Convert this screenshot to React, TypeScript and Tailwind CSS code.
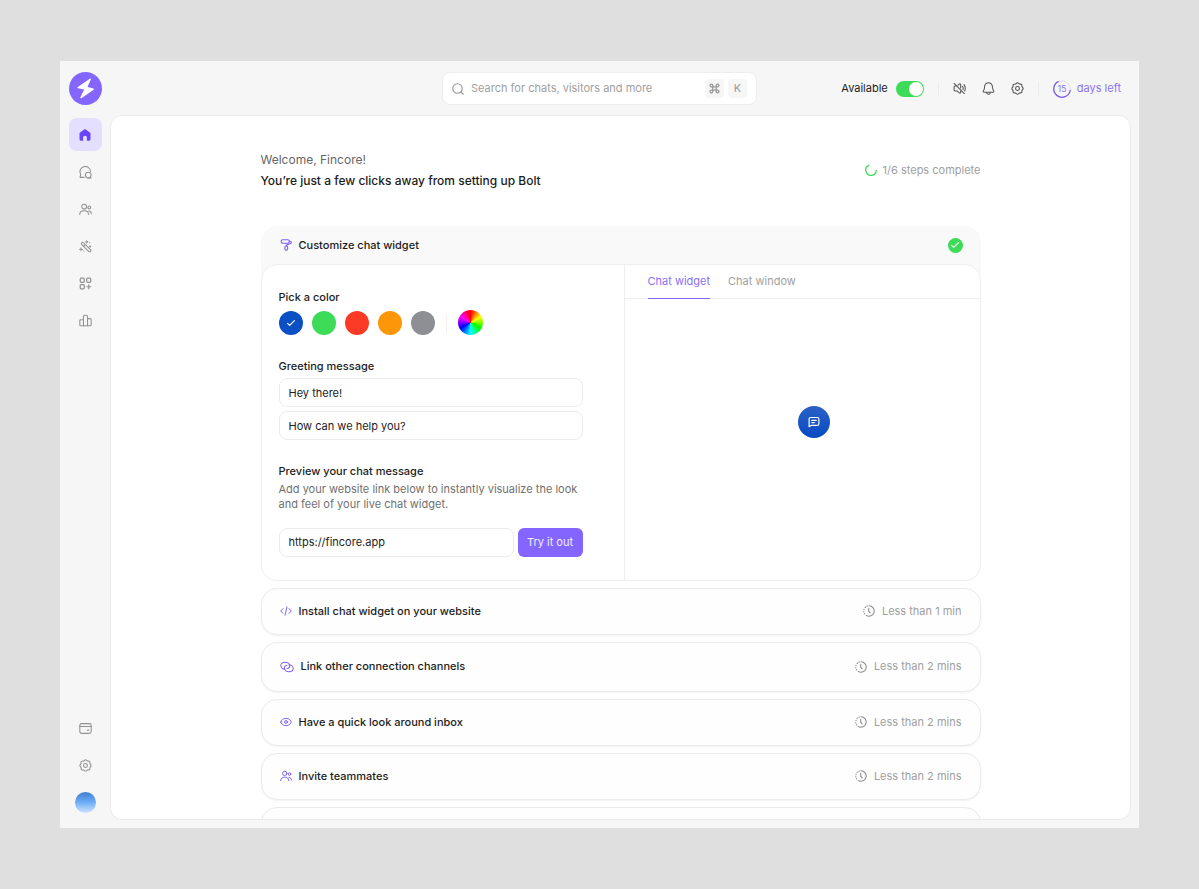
import React, { useState } from "react";
import clsx from "clsx";

type IconProps = { className?: string };

const Icon = ({
  className = "size-3",
  width = 1.3,
  box = "0 0 16 16",
  children,
}: IconProps & { width?: number; box?: string; children: React.ReactNode }) => (
  <svg
    viewBox={box}
    fill="none"
    stroke="currentColor"
    strokeWidth={width}
    strokeLinecap="round"
    strokeLinejoin="round"
    className={clsx("shrink-0", className)}
    aria-hidden="true"
  >
    {children}
  </svg>
);

const HomeIcon = ({ className }: IconProps) => (
  <svg viewBox="0 0 12 12" fill="currentColor" className={className} aria-hidden="true">
    <path d="M5.2.4a1.3 1.3 0 0 1 1.6 0l4.1 3.2c.4.3.6.7.6 1.2V10c0 1.1-.7 1.8-1.8 1.8H7.9V8.6a1.9 1.9 0 0 0-3.8 0v3.2H2.3C1.2 11.8.5 11.1.5 10V4.8c0-.5.2-.9.6-1.2z" />
  </svg>
);

const ChatsIcon = ({ className }: IconProps) => (
  <Icon className={className}>
    <path d="M14.2 6.6A6.5 6.5 0 1 0 2.1 10.300L1.300 14h4.900" />
    <circle cx="11.400" cy="11.200" r="3.500" />
    <path d="M14 13.700l.9 1.100h-3.500" />
  </Icon>
);

const PeopleIcon = ({ className }: IconProps) => (
  <Icon className={className}>
    <circle cx="6.3" cy="4.5" r="2.9" />
    <circle cx="12.7" cy="5.5" r="1.7" />
    <path d="M.9 14.2c0-3 2.200-4.700 5.400-4.700s5.400 1.700 5.400 4.700M12 9.800c2 .1 3.200 1.400 3.200 3.500" />
  </Icon>
);

const WandIcon = ({ className }: IconProps) => (
  <Icon className={className} width={1.3}>
    <path d="M3.400 3.400a1.500 1.500 0 0 1 2.200 0l8.500 8.500a1.500 1.500 0 0 1-2.200 2.200L3.400 5.600a1.500 1.500 0 0 1 0-2.200zM7.800 5.600 5.600 7.800" />
    <path d="M9.500 1v2.600M8.200 2.300h2.600M2.500 9.500v3.600M.7 11.300h3.600M13.600 7.200v1.600M12.800 8h1.600M13.200 3.300l.1.100M6 13.500l.1.100" />
  </Icon>
);

const AppsIcon = ({ className }: IconProps) => (
  <Icon className={className} width={1.5}>
    <rect x="1.5" y="1.5" width="5" height="5" rx="1.2" />
    <rect x="9.5" y="1.5" width="5" height="5" rx="1.2" />
    <rect x="1.5" y="9.5" width="5" height="5" rx="1.2" />
    <path d="M12 9.600v4.800M9.600 12h4.800" />
  </Icon>
);

const ReportsIcon = ({ className }: IconProps) => (
  <Icon className={className}>
    <path d="M5.500 14.500V3a1.500 1.500 0 0 1 1.500-1.500h2A1.500 1.500 0 0 1 10.500 3v11.500" />
    <path d="M5.500 7H2.300C1.500 7 1 7.500 1 8.300v4.900c0 .8.500 1.300 1.300 1.300h11.400c.8 0 1.300-.5 1.300-1.300V7c0-.8-.5-1.300-1.300-1.300h-3.200" />
  </Icon>
);

const CardIcon = ({ className }: IconProps) => (
  <Icon className={className}>
    <rect x="1" y="2" width="14" height="12" rx="2.2" />
    <path d="M1 5.500h14M10.500 10h1.500" />
  </Icon>
);

const GearIcon = ({ className }: IconProps) => (
  <Icon className={className}>
    <circle cx="8" cy="8" r="2.4" />
    <path d="M8 1c1 0 1.600 1.300 2.500 1.600s2-.4 2.600.3.100 1.700.4 2.600S15 7 15 8s-1.200 1.600-1.500 2.500.3 2-.4 2.600-1.700.1-2.600.4S9 15 8 15s-1.600-1.200-2.500-1.500-2 .3-2.600-.4-.1-1.700-.4-2.600S1 9 1 8s1.200-1.600 1.500-2.500-.300-2 .4-2.600 1.700.1 2.600-.3S7 1 8 1z" />
  </Icon>
);

const BellIcon = ({ className }: IconProps) => (
  <Icon className={className}>
    <path d="M8 1a4.800 4.800 0 0 0-4.800 4.800c0 2.700-.7 3.900-1.500 5-.6.900-.2 1.900.8 1.900h11c1 0 1.400-1 .8-1.900-.8-1.100-1.500-2.300-1.500-5A4.800 4.800 0 0 0 8 1zM5.800 12.900a2.200 2.200 0 0 0 4.400 0" />
  </Icon>
);

const MuteIcon = ({ className }: IconProps) => (
  <Icon className={className}>
    <path d="M1.300 1.800 14 14.200M6.200 3.800l1.600-1.300c.7-.6 1.600-.2 1.600.7v4.300M9.400 11v1.800c0 .9-.9 1.300-1.600.7L5 11H2.700c-.9 0-1.400-.5-1.400-1.400V6.400c0-.9.500-1.400 1.400-1.400h1.500" />
    <path d="M11.700 5.300c.8 1.200 1 2.700.6 4.100M13.600 3.200c1.500 2.100 1.900 5.200.8 7.900" />
  </Icon>
);

const SearchIcon = ({ className }: IconProps) => (
  <Icon className={className} width={1.5}>
    <circle cx="7.3" cy="7.3" r="6.3" />
    <path d="m12 12 3 3" />
  </Icon>
);

const CommandIcon = ({ className }: IconProps) => (
  <Icon className={className} width={1.8}>
    <path d="M5.500 5.500h5v5h-5zM5.500 5.500V3.500a2 2 0 1 0-2 2zM10.500 5.500V3.500a2 2 0 1 1 2 2zM5.500 10.500v2a2 2 0 1 1-2-2zM10.500 10.500v2a2 2 0 1 0 2-2z" />
  </Icon>
);

const RollerIcon = ({ className }: IconProps) => (
  <Icon className={className} width={1.5}>
    <rect x="1.5" y="1" width="11" height="4.6" rx="2.2" />
    <path d="M12.500 3h.9c1 0 1.600.7 1.600 1.600 0 1-.5 1.500-1.500 1.800L9.600 7.500c-.9.300-1.300.8-1.300 1.700" />
    <path d="M8.300 9.300c1.100 0 1.900.8 1.900 1.900v1.600c0 1.200-.8 2.200-1.900 2.200s-1.900-1-1.900-2.200v-1.600c0-1.100.8-1.900 1.900-1.900z" />
  </Icon>
);

const CodeIcon = ({ className }: IconProps) => (
  <Icon className={className}>
    <path d="M4 4.800.9 8 4 11.200M12 4.800 15.100 8 12 11.200M9.300 2.500l-2.600 11" />
  </Icon>
);

const LinkIcon = ({ className }: IconProps) => (
  <Icon className={className} box="0 0 18 14">
    <path d="M6.500 9.800C3.500 9.800 1 7.700 1 5.200 1 2.800 3.400 1 6.500 1s6 1.800 6 4.400c0 2-1.500 3.400-3.500 3.800" />
    <path d="M11.500 4.200c3 0 5.500 2.100 5.500 4.600 0 2.400-2.400 4.200-5.500 4.200s-6-1.800-6-4.400c0-2 1.500-3.400 3.500-3.800" />
  </Icon>
);

const EyeIcon = ({ className }: IconProps) => (
  <Icon className={className}>
    <path d="M1 8c0-1.500 3-5 7-5s7 3.500 7 5-3 5-7 5-7-3.500-7-5z" />
    <circle cx="8" cy="8" r="1.9" />
  </Icon>
);

const TimerIcon = ({ className }: IconProps) => (
  <Icon className={className} width={1.5}>
    <path d="M8 1a7 7 0 1 1-3.500 13.100" />
    <path d="M2.300 12a7 7 0 0 1 3.400-10.600" strokeDasharray=".6 2.400" />
    <path d="M7.600 4.500v3.700l1.800 2.400" />
  </Icon>
);

const CheckIcon = ({ className }: IconProps) => (
  <Icon className={className} width={1.8}>
    <path d="m2.500 8.600 3.400 3.300 7.600-7.800" />
  </Icon>
);

const MessageIcon = ({ className }: IconProps) => (
  <Icon className={className} width={1.6}>
    <path d="M1.500 14.300V4c0-1.300.7-2 2-2h9c1.300 0 2 .7 2 2v6.500c0 1.300-.7 2-2 2H4.800c-.8 0-1.300.2-1.800.7z" />
    <path d="M5 5.800h6M5 8.700h3.500" />
  </Icon>
);

const mainNav = [
  { label: "Inbox", icon: ChatsIcon },
  { label: "Visitors", icon: PeopleIcon },
  { label: "Automations", icon: WandIcon },
  { label: "Apps", icon: AppsIcon },
  { label: "Reports", icon: ReportsIcon },
];

const colors = [
  { name: "Blue", swatch: "bg-[#0a4fc4]" },
  { name: "Green", swatch: "bg-[#3edb58]" },
  { name: "Red", swatch: "bg-[#fd3a26]" },
  { name: "Orange", swatch: "bg-[#fd9608]" },
  { name: "Gray", swatch: "bg-[#8e8f94]" },
];

const steps = [
  { title: "Install chat widget on your website", time: "Less than 1 min", icon: CodeIcon },
  { title: "Link other connection channels", time: "Less than 2 mins", icon: LinkIcon, wide: true },
  { title: "Have a quick look around inbox", time: "Less than 2 mins", icon: EyeIcon },
  { title: "Invite teammates", time: "Less than 2 mins", icon: PeopleIcon },
  { title: "", time: "", icon: null },
];

const inputStyle =
  "h-[29px] w-full min-w-0 rounded-lg border border-[#ebebeb] bg-white px-[9px] text-[#222] outline-none";

const Header = () => {
  const [available, setAvailable] = useState(true);

  return (
    <header className="grid h-[54px] shrink-0 grid-cols-[1fr_315px_1fr] items-center pt-px">
      <a href="#" aria-label="Bolt" className="ml-[9px] size-[33px]">
        <svg viewBox="0 0 33 33" aria-hidden="true">
          <circle cx="16.5" cy="16.5" r="16.5" fill="#8466ff" />
          <path
            d="M21.200 7.200 9.200 15.600l7 1.500L12 25.600l12.200-8.500-6.700-1.600z"
            fill="#fff"
            stroke="#fff"
            strokeWidth="1.4"
            strokeLinejoin="round"
          />
        </svg>
      </a>

      <label className="flex h-[33px] items-center rounded-lg border border-[#eeeeee] bg-white px-[9px] text-[#999]">
        <SearchIcon className="size-3" />
        <input
          type="search"
          aria-label="Search"
          placeholder="Search for chats, visitors and more"
          className="ml-[7px] min-w-0 flex-1 outline-none placeholder:text-[#a0a0a0]"
        />
        <kbd className="flex size-[19px] items-center justify-center rounded bg-[#f6f6f6]">
          <CommandIcon className="size-[11px]" />
        </kbd>
        <kbd className="ml-1 flex size-[19px] items-center justify-center rounded bg-[#f6f6f6] font-[Inter,sans-serif]">
          K
        </kbd>
      </label>

      <div className="mr-[18px] flex items-center justify-end text-[#555]">
        <label className="flex items-center gap-2 text-[#1c1c1c]">
          Available
          <input
            type="checkbox"
            role="switch"
            checked={available}
            onChange={() => setAvailable(!available)}
            className="peer sr-only"
          />
          <span className="flex h-4 w-7 items-center rounded-full bg-[#c9c9c9] p-px peer-checked:justify-end peer-checked:bg-[#3edb58]">
            <span className="size-3.5 rounded-full bg-white" />
          </span>
        </label>
        <span className="mx-[14px] h-3.5 w-px bg-[#ececec]" />
        <div className="flex gap-4">
          <button type="button" aria-label="Mute">
            <MuteIcon className="size-[13px]" />
          </button>
          <button type="button" aria-label="Notifications">
            <BellIcon className="size-[13px]" />
          </button>
          <button type="button" aria-label="Preferences">
            <GearIcon className="size-[13px]" />
          </button>
        </div>
        <span className="mx-[14px] h-3.5 w-px bg-[#ececec]" />
        <a href="#" className="flex items-center gap-1.5 whitespace-nowrap text-[#8b74ee]">
          <svg viewBox="0 0 18 18" className="size-[18px]" fill="none" aria-hidden="true">
            <circle cx="9" cy="9" r="8.3" stroke="#e2dcfb" strokeWidth="1" />
            <path
              d="M5.200 1.600A8.300 8.300 0 1 0 17.200 10.500"
              stroke="#7857f0"
              strokeWidth="1.3"
              strokeLinecap="round"
            />
            <text x="9" y="12" textAnchor="middle" fontSize="9" fill="#8b74ee">
              15
            </text>
          </svg>
          days left
        </a>
      </div>
    </header>
  );
};

const Sidebar = () => (
  <aside className="flex w-[50px] shrink-0 flex-col items-center justify-between pt-[3px] pb-0.5 text-[#929292]">
    <nav className="flex flex-col items-center gap-[5px]">
      <a
        href="#"
        aria-label="Home"
        className="flex size-[33px] items-center justify-center rounded-lg bg-[#e4deff] text-[#6a45f8]"
      >
        <HomeIcon className="size-3" />
      </a>
      {mainNav.map(({ label, icon: NavIcon }) => (
        <a key={label} href="#" aria-label={label} className="flex size-8 items-center justify-center">
          <NavIcon className="size-[13px]" />
        </a>
      ))}
    </nav>
    <nav className="flex flex-col items-center gap-[5px]">
      <a href="#" aria-label="Billing" className="flex size-8 items-center justify-center">
        <CardIcon className="size-[13px]" />
      </a>
      <a href="#" aria-label="Settings" className="flex size-8 items-center justify-center">
        <GearIcon className="size-[13px]" />
      </a>
      <a href="#" aria-label="Profile" className="flex size-8 items-center justify-center">
        <span className="size-[21px] rounded-full bg-linear-to-b from-[#3d7fd0] via-[#6fadf8] to-[#cfe4ff]" />
      </a>
    </nav>
  </aside>
);

const WidgetForm = () => {
  const [color, setColor] = useState("Blue");

  return (
    <div className="w-[363px] shrink-0 border-r border-[#eeeeee] pt-6 pr-[41px] pb-[23px] pl-[17px]">
      <fieldset>
        <legend className="leading-4 font-medium">Pick a color</legend>
        <div className="mt-[5px] flex items-center gap-[9px]">
          {colors.map(({ name, swatch }) => (
            <label
              key={name}
              className={clsx("flex size-6 items-center justify-center rounded-full text-white", swatch)}
            >
              <input
                type="radio"
                name="color"
                aria-label={name}
                checked={color === name}
                onChange={() => setColor(name)}
                className="sr-only"
              />
              {color === name && <CheckIcon className="size-2.5" />}
            </label>
          ))}
          <span className="mx-0.5 h-[18px] w-px bg-[#f3ecf2]" />
          <button
            type="button"
            aria-label="Custom color"
            className="size-[25px] rounded-full bg-[conic-gradient(#f00,#ff0,#0f0,#0ff,#00f,#f0f,#f00)]"
          />
        </div>
      </fieldset>

      <fieldset className="mt-[23px]">
        <legend className="leading-4 font-medium">Greeting message</legend>
        <div className="mt-1 flex flex-col gap-1">
          <input aria-label="First greeting line" defaultValue="Hey there!" className={inputStyle} />
          <input aria-label="Second greeting line" defaultValue="How can we help you?" className={inputStyle} />
        </div>
      </fieldset>

      <div className="mt-[23px]">
        <label htmlFor="website" className="leading-4 font-medium">
          Preview your chat message
        </label>
        <p className="mt-0.5 leading-[15px] text-[#707070]">
          Add your website link below to instantly visualize the look and feel of your live chat widget.
        </p>
        <div className="mt-4 flex gap-1">
          <input id="website" type="url" defaultValue="https://fincore.app" className={inputStyle} />
          <button
            type="button"
            className="h-[29px] w-[65px] shrink-0 rounded-md bg-[#8466ff] text-[#f1edff]"
          >
            Try it out
          </button>
        </div>
      </div>
    </div>
  );
};

const WidgetPreview = () => (
  <div className="flex min-w-0 flex-1 flex-col">
    <div role="tablist" className="flex h-[34px] gap-[18px] border-b border-[#eeeeee] pl-[23px]">
      <button
        type="button"
        role="tab"
        aria-selected="true"
        className="-mb-px border-b border-[#8466ff] text-[#8b6ff5]"
      >
        Chat widget
      </button>
      <button type="button" role="tab" aria-selected="false" className="text-[#a0a0a0]">
        Chat window
      </button>
    </div>
    <div className="flex flex-1 items-center justify-center pb-[34px] pl-6">
      <button
        type="button"
        aria-label="Open chat"
        className="flex size-8 items-center justify-center rounded-full bg-linear-to-b from-[#2a61c4] to-[#0549c4] text-white"
      >
        <MessageIcon className="size-3" />
      </button>
    </div>
  </div>
);

const Setup = () => (
  <main className="min-w-0 flex-1 overflow-hidden rounded-xl border border-[#ebebeb] bg-white">
    <div className="mx-auto w-full max-w-[720px] pt-[33px]">
      <div className="flex items-center justify-between">
        <div className="text-xs leading-[21px]">
          <p className="text-[#666]">Welcome, Fincore!</p>
          <h1 className="font-medium">You’re just a few clicks away from setting up Bolt</h1>
        </div>
        <p className="flex items-center gap-1.5 text-[#a0a0a0]">
          <Icon className="size-3 text-[#3edb58]" width={1.6}>
            <path d="M5 1.800A7 7 0 1 0 15 8.500" />
          </Icon>
          1/6 steps complete
        </p>
      </div>

      <div className="mt-[35px] flex flex-col gap-[7px]">
        <section className="rounded-2xl bg-[#f9f9f9]">
          <div className="flex h-[38px] items-center px-[18px]">
            <RollerIcon className="ml-px size-3 text-[#7c60ee]" />
            <h2 className="ml-[7px] flex-1 font-medium">Customize chat widget</h2>
            <span className="flex size-[15px] items-center justify-center rounded-full bg-[#3edb58] text-white">
              <CheckIcon className="size-2.5" />
            </span>
          </div>
          <div className="flex overflow-hidden rounded-2xl border border-[#efefef] bg-white">
            <WidgetForm />
            <WidgetPreview />
          </div>
        </section>

        {steps.map(({ title, time, icon: StepIcon, wide }) => (
          <button
            key={title}
            type="button"
            className={clsx(
              "flex items-center rounded-2xl border border-[#ebebeb] bg-[#fefefe] px-[18px] shadow-xs",
              wide ? "h-[50px]" : "h-[47px]"
            )}
          >
            {StepIcon && (
              <>
                <StepIcon className={clsx("text-[#7c60ee]", wide ? "h-3 w-3.5" : "size-3")} />
                <span className="ml-[7px] flex-1 text-left font-medium">{title}</span>
                <TimerIcon className="size-3 text-[#8f8f8f]" />
                <span className="ml-[7px] text-[#a0a0a0]">{time}</span>
              </>
            )}
          </button>
        ))}
      </div>
    </div>
  </main>
);

export default function App() {
  return (
    <div className="h-screen bg-[#dfdfdf] px-[60px] py-[61px] font-[Inter,sans-serif] text-[11px] text-[#1c1c1c]">
      <div className="flex h-full flex-col bg-[#f6f6f6]">
        <Header />
        <div className="flex min-h-0 flex-1 pr-2 pb-2">
          <Sidebar />
          <Setup />
        </div>
      </div>
    </div>
  );
}
